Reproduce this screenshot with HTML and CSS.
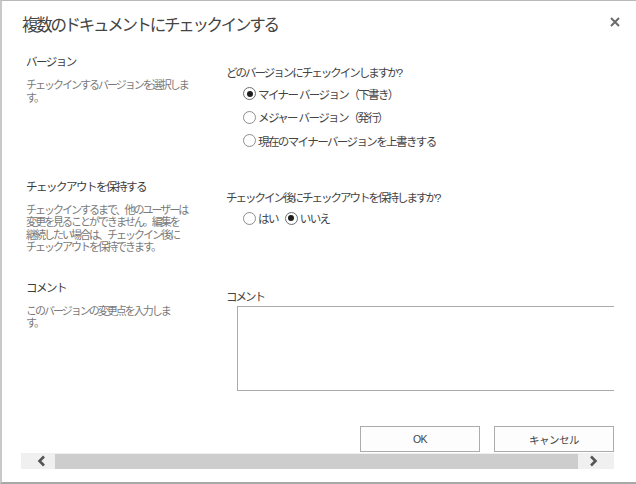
FILE: index.html
```html
<!DOCTYPE html>
<html lang="ja">
<head>
<meta charset="utf-8">
<title>複数のドキュメントにチェックインする</title>
<link rel="stylesheet" href="styles.css">
</head>
<body>
<div class="dialog">
  <div class="titlebar">
    <h1 class="title">複数のドキュメントにチェックインする</h1>
    <span class="close"><svg width="10" height="10" viewBox="0 0 10 10"><path d="M1 1L9 9M9 1L1 9" stroke="#6b6b6b" stroke-width="2"/></svg></span>
  </div>
  <div class="scroller">
    <div class="viewport">
      <div class="section">
        <div class="info">
          <div class="heading">バージョン</div>
          <div class="desc"><span class="line">チェックインするバージョンを選択しま</span><span class="line">す。</span></div>
        </div>
        <div class="field">
          <div class="question">どのバージョンにチェックインしますか?</div>
          <div class="radios">
            <div class="radio-row"><span class="radio on"></span><span class="label">マイナー&nbsp;バージョン（下書き）</span></div>
            <div class="radio-row"><span class="radio"></span><span class="label">メジャー&nbsp;バージョン（発行）</span></div>
            <div class="radio-row"><span class="radio"></span><span class="label">現在のマイナーバージョンを上書きする</span></div>
          </div>
        </div>
      </div>
      <div class="section">
        <div class="info">
          <div class="heading">チェックアウトを保持する</div>
          <div class="desc"><span class="line">チェックインするまで、他のユーザーは</span><span class="line">変更を見ることができません。編集を</span><span class="line">継続したい場合は、チェックイン後に</span><span class="line">チェックアウトを保持できます。</span></div>
        </div>
        <div class="field">
          <div class="question">チェックイン後にチェックアウトを保持しますか?</div>
          <div class="radio-row inline">
            <span class="radio"></span><span class="label gap">はい</span>
            <span class="radio on"></span><span class="label">いいえ</span>
          </div>
        </div>
      </div>
      <div class="section last">
        <div class="info">
          <div class="heading">コメント</div>
          <div class="desc"><span class="line">このバージョンの変更点を入力しま</span><span class="line">す。</span></div>
        </div>
        <div class="field comment-field">
          <div class="question">コメント</div>
          <textarea class="comment"></textarea>
        </div>
      </div>
      <div class="buttons">
        <button class="btn">OK</button>
        <button class="btn">キャンセル</button>
      </div>
    </div>
    <div class="hscroll">
      <span class="sb-btn left"><svg width="9" height="12" viewBox="0 0 9 12"><path d="M7 1.5L2.5 6L7 10.5" fill="none" stroke="#555" stroke-width="2.6"/></svg></span>
      <span class="thumb"></span>
      <span class="sb-btn right"><svg width="9" height="12" viewBox="0 0 9 12"><path d="M2 1.5L6.5 6L2 10.5" fill="none" stroke="#555" stroke-width="2.6"/></svg></span>
    </div>
  </div>
</div>
</body>
</html>
```
FILE: styles.css
```css
html, body {
  margin: 0;
  padding: 0;
  background: #ffffff;
}
body {
  font-family: "Liberation Sans", "Noto Sans CJK JP", sans-serif;
  color: #444;
}
.dialog {
  width: 636px;
  height: 484px;
  box-sizing: border-box;
  border-top: 1px solid #b9b9b9;
  border-left: 2px solid #c8c8c8;
  border-bottom: 2px solid #a8a8a8;
  display: flex;
  flex-direction: column;
  background: #fff;
}
.titlebar {
  height: 51px;
  box-sizing: border-box;
  padding: 12px 16px 0 20px;
  display: flex;
  justify-content: space-between;
  align-items: flex-start;
}
.title {
  margin: 0;
  font-weight: normal;
  font-size: 16.5px;
  letter-spacing: -2.3px;
  line-height: 24px;
  color: #444;
}
.close {
  display: block;
  width: 10px;
  height: 10px;
  margin-top: 4px;
}
.close svg { display: block; }
.scroller {
  margin-left: 19px;
  width: 593px;
}
.viewport {
  overflow: hidden;
}
.section {
  display: grid;
  grid-template-columns: 200px 1fr;
  padding-left: 5px;
  margin-bottom: 24px;
}
.section.last { margin-bottom: 0; }
.heading {
  font-size: 11.5px;
  letter-spacing: -1.5px;
  line-height: 20px;
  color: #3c3c3c;
  white-space: nowrap;
}
.desc {
  margin-top: 7px;
  font-size: 11px;
  letter-spacing: -2px;
  line-height: 12.5px;
  color: #7a7a7a;
  white-space: nowrap;
}
.desc .line {
  display: block;
  height: 12.5px;
}
.field {
  padding-top: 12px;
}
.comment-field { padding-top: 10px; }
.question {
  font-size: 11.5px;
  letter-spacing: -2px;
  line-height: 18px;
  color: #444;
  white-space: nowrap;
}
.radio-row {
  height: 23.5px;
  display: flex;
  align-items: center;
  padding-left: 17px;
  font-size: 11.5px;
  letter-spacing: -1.6px;
  color: #444;
  white-space: nowrap;
}
.radio {
  width: 13px;
  height: 13px;
  box-sizing: border-box;
  border: 1px solid #8e8e8e;
  border-radius: 50%;
  background: #fff;
  margin-right: 2px;
  display: flex;
  align-items: center;
  justify-content: center;
  flex: none;
}
.radio.on {
  border-color: #6e6e6e;
}
.radio.on::after {
  content: "";
  width: 6px;
  height: 6px;
  border-radius: 50%;
  background: #1e1e1e;
}
.label.gap { margin-right: 7px; }
.comment {
  display: block;
  margin: 0 0 0 11px;
  width: 420px;
  height: 85px;
  box-sizing: border-box;
  border: 1px solid #ababab;
  resize: none;
  padding: 0;
  background: #fff;
}
.buttons {
  margin-top: 35.5px;
  display: flex;
  justify-content: flex-end;
  gap: 14px;
}
.btn {
  width: 120px;
  height: 26px;
  box-sizing: border-box;
  border: 1px solid #ababab;
  background: #fdfdfd;
  font-family: "Liberation Sans", "Noto Sans CJK JP", sans-serif;
  font-size: 10.5px;
  letter-spacing: -0.5px;
  color: #444;
  padding: 0;
  margin: 0;
}
.hscroll {
  margin-top: 1px;
  height: 16px;
  display: flex;
  background: #f0f0f0;
}
.sb-btn {
  display: flex;
  align-items: center;
  flex: none;
}
.sb-btn.left {
  width: 34px;
  padding-left: 16px;
  box-sizing: border-box;
}
.sb-btn.right {
  width: 36px;
  padding-left: 11px;
  box-sizing: border-box;
}
.sb-btn svg { display: block; }
.thumb {
  flex: 1;
  margin-top: 1px;
  background: #cdcdcd;
}
```
